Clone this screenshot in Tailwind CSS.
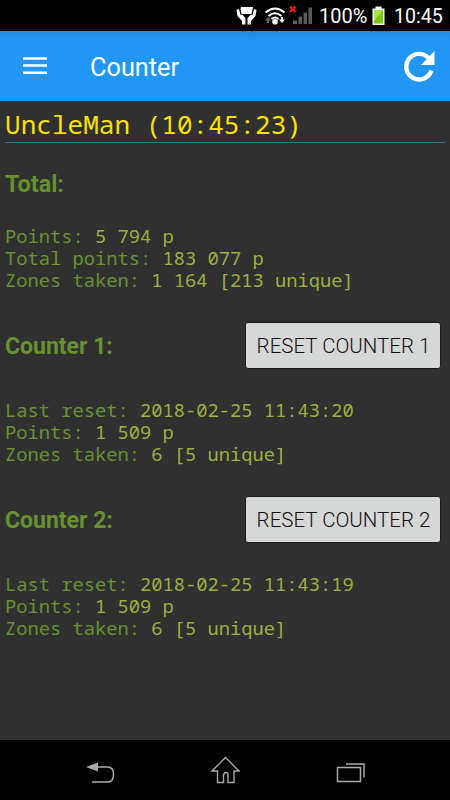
<!DOCTYPE html>
<html lang="en">
<head>
<meta charset="utf-8">
<title>Counter</title>
<script src="https://cdn.jsdelivr.net/npm/@tailwindcss/browser@4"></script>
</head>
<body class="bg-[#303030] font-['Roboto',sans-serif]">
<div class="w-[450px] h-[800px] flex flex-col overflow-hidden">
  <!-- Status bar -->
  <div class="h-[31px] shrink-0 bg-black flex items-center text-white text-[20px] leading-[33px] pl-[236px]">
    <svg class="shrink-0" width="94" height="31" viewBox="0 0 94 31">
      <path d="M5 7h12l-1.500 7H5.500L4.500 9z" fill="#fff"/>
      <path d="M3 9L.500 10l1 6L6 21v3.500h3.500V18L6 14.500l-1.500.500zM18 9l2.500 1-1 6L15 21v3.500h-3.500V18l3.500-3.500 1.500.500z" fill="#fff"/>
      <path d="M29.500 12.500q9.500-8 19 0M32.500 16q6.500-5.500 13 0M35.500 19q3.500-3 7 0" fill="none" stroke="#fff" stroke-width="2"/>
      <circle cx="39" cy="21.700" r="2.800" fill="#fff"/>
      <path d="M32 17l3 3.500h-2V23h-2v-2.500h-2z" fill="#666"/>
      <path d="M46 23l3-3.500h-2V17h-2v2.500h-2z" fill="#fff"/>
      <path d="M57 20.500h4V24h-4zM62.500 16.500h3.500V24h-3.500zM67.500 12.500H71V24h-3.500zM72.500 7.500H76V24h-3.500z" fill="#5c5c5c"/>
      <path d="M54 6.500l5.500 5.500M59.500 6.500L54 12" stroke="#f01818" stroke-width="2.300"/>
    </svg>
    <span class="-ml-[11px] w-[53px] pt-px whitespace-nowrap">100%</span>
    <svg class="shrink-0" width="13" height="31" viewBox="0 0 13 31">
      <path d="M3.500 6.500h6v2h3V25H.500V8.500h3z" fill="#f3f7e8"/>
      <path d="M2 10h9v13.500H2z" fill="#79c919"/>
      <path d="M2 10h9L2 21z" fill="#a7e34d"/>
    </svg>
    <span class="ml-[9px] pt-px text-[19.600px] whitespace-nowrap">10:45</span>
  </div>
  <!-- App bar -->
  <div class="h-[70px] shrink-0 bg-[#2196f3] bg-linear-to-b from-[#2389de] to-[#2196f3] to-15% flex items-center pl-[23px] pr-[15px] text-white">
    <svg width="24" height="18" viewBox="0 0 24 18"><path d="M0 1.500h24M0 8.600h24M0 15.700h24" stroke="#fff" stroke-width="2.500"/></svg>
    <span class="ml-[43px] pt-[3px] text-[25.300px] grow">Counter</span>
    <svg width="31" height="31" viewBox="0 0 31 31">
      <path d="M24.500 7A12.800 12.800 0 1 0 27.300 19.500" fill="none" stroke="#fff" stroke-width="4.400"/>
      <path d="M30.500 0v14H17z" fill="#fff"/>
    </svg>
  </div>
  <!-- Content -->
  <main class="grow px-[5px] font-['Noto_Sans_Mono','DejaVu_Sans_Mono',monospace] text-[18.750px] leading-[22px] text-[#689030] whitespace-nowrap">
    <div class="h-[42px] border-b border-[#1f7a92] text-[#ffe000] text-[26.050px] leading-[47px]">UncleMan (10:45:23)</div>
    <h2 class="mt-[26px] h-[30px] leading-[30px] text-[23.400px] font-bold font-['Roboto',sans-serif]">Total:</h2>
    <section class="mt-[26px] h-[66px]">
      <p>Points: <span class="text-[#9caf40]">5 794 p</span></p>
      <p>Total points: <span class="text-[#9caf40]">183 077 p</span></p>
      <p>Zones taken: <span class="text-[#9caf40]">1 164 [213 unique]</span></p>
    </section>
    <div class="mt-[31px] h-[46px] mr-[4px] flex items-center justify-between font-['Roboto',sans-serif]">
      <h2 class="pt-[3px] text-[23px] font-bold">Counter 1:</h2>
      <button class="w-[196px] h-[47px] pt-[2px] pl-px rounded-[3px] bg-[#d6d7d7] border border-[#1c1c1c] text-[#101010] text-[20.500px] font-[350]">RESET COUNTER 1</button>
    </div>
    <section class="mt-[31px] h-[66px]">
      <p>Last reset: <span class="text-[#9caf40]">2018-02-25 11:43:20</span></p>
      <p>Points: <span class="text-[#9caf40]">1 509 p</span></p>
      <p>Zones taken: <span class="text-[#9caf40]">6 [5 unique]</span></p>
    </section>
    <div class="mt-[31px] h-[46px] mr-[4px] flex items-center justify-between font-['Roboto',sans-serif]">
      <h2 class="pt-[3px] text-[23px] font-bold">Counter 2:</h2>
      <button class="w-[196px] h-[47px] pt-[2px] pl-px rounded-[3px] bg-[#d6d7d7] border border-[#1c1c1c] text-[#101010] text-[20.500px] font-[350]">RESET COUNTER 2</button>
    </div>
    <section class="mt-[31px] h-[66px]">
      <p>Last reset: <span class="text-[#9caf40]">2018-02-25 11:43:19</span></p>
      <p>Points: <span class="text-[#9caf40]">1 509 p</span></p>
      <p>Zones taken: <span class="text-[#9caf40]">6 [5 unique]</span></p>
    </section>
  </main>
  <!-- Navigation bar -->
  <nav class="h-[60px] shrink-0 bg-black flex items-center justify-between pl-[86px] pr-[85px]">
    <svg width="29" height="28" viewBox="0 0 29 28">
      <path d="M11 11h10.500q6 0 6 7.500t-6 7.500H6" fill="none" stroke="#aaa" stroke-width="1.500"/>
      <path d="M0 11l12-4.500v9z" fill="#aaa"/>
    </svg>
    <svg class="-ml-px" width="29" height="28" viewBox="0 0 29 28">
      <path d="M14.500 1.500L28 15h-5v11.500h-6V19q0-2.500-2-2.500T12.500 19v7.500H6.500V15H1z" fill="none" stroke="#aaa" stroke-width="1.400"/>
    </svg>
    <svg class="-mr-px -translate-x-px" width="29" height="28" viewBox="0 0 29 28">
      <path d="M1.500 11.500h23v14h-23zM10 8h18v13.500" fill="none" stroke="#aaa" stroke-width="1.500"/>
    </svg>
  </nav>
</div>
</body>
</html>
